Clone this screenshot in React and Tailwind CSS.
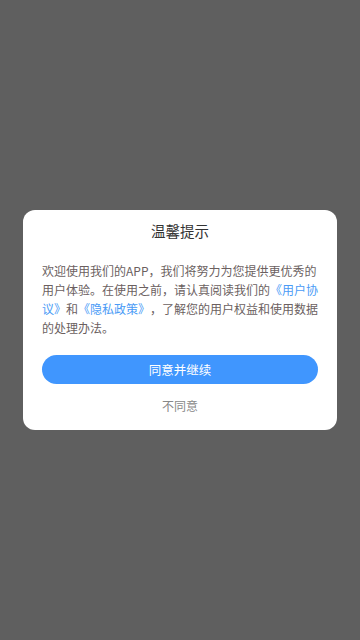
export default function App() {
  return (
    <div
      className="min-h-screen w-full bg-[#5f5f5f] flex items-center justify-center px-[23px]"
      style={{ fontFamily: '"Noto Sans CJK SC", "Noto Sans", sans-serif' }}
    >
      <div className="w-full bg-white rounded-[12px] px-[19px] pt-[12px] pb-[8px] flex flex-col">
        <div className="text-center text-[14.5px] leading-[18px] text-[#333333]">温馨提示</div>
        <p className="mt-[21px] mr-[-3px] text-[12px] leading-[19.2px] text-[#6b5f5f] [text-spacing-trim:space-all]">
          欢迎使用我们的APP，我们将努力为您提供更优秀的用户体验。在使用之前，请认真阅读我们的
          <span className="text-[#4a9bf6]">《用户协议》</span>和
          <span className="text-[#4a9bf6]">《隐私政策》</span>，了解您的用户权益和使用数据的处理办法。
        </p>
        <button className="mt-[18px] h-[29px] w-full rounded-full bg-[#4096fe] text-white text-[12.5px] flex items-center justify-center">
          同意并继续
        </button>
        <button className="mt-[6px] h-[32px] w-full text-[12px] text-[#888888] flex items-center justify-center">
          不同意
        </button>
      </div>
    </div>
  );
}
